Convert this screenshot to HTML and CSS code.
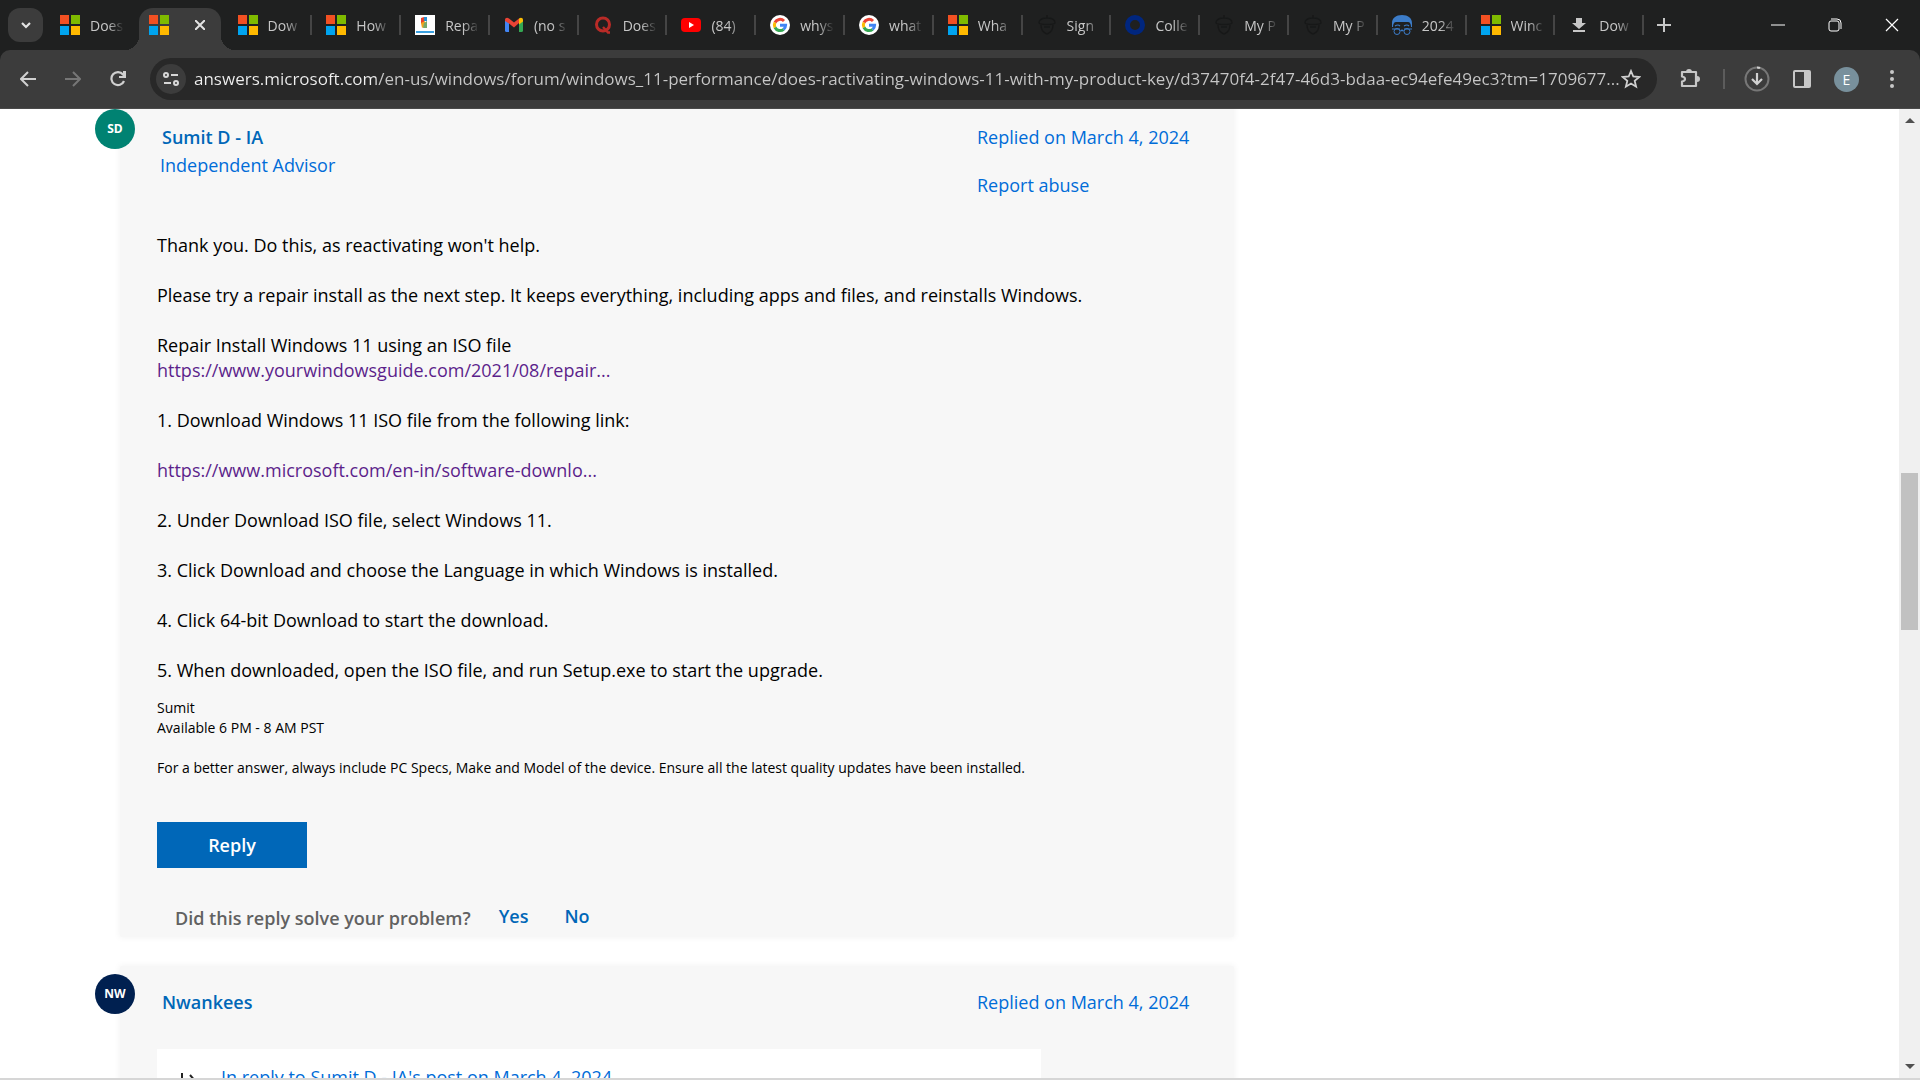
FILE: index.html
```html
<!DOCTYPE html>
<html lang="en">
  <head>
    <meta charset="UTF-8" />
    <meta name="viewport" content="width=device-width, initial-scale=1.0" />
    <title>Microsoft Community</title>
    <link rel="stylesheet" href="styles.css">
  </head>
  <body>
    <!-- shared icons -->
    <svg class="sprites" aria-hidden="true">
      <symbol id="ms" viewBox="0 0 20 20">
        <path fill="#f25022" d="M0 0h9v9H0z" />
        <path fill="#7fba00" d="M11 0h9v9h-9z" />
        <path fill="#00a4ef" d="M0 11h9v9H0z" />
        <path fill="#ffb900" d="M11 11h9v9h-9z" />
      </symbol>
      <symbol id="google" viewBox="0 0 20 20">
        <circle cx="10" cy="10" r="10" fill="#fff" />
        <path fill="none" stroke="#ea4335" stroke-width="3" d="M5 7.500a5.600 5.600 0 0 1 9-1.500" />
        <path fill="none" stroke="#fbbc05" stroke-width="3" d="M5 12.500a5.600 5.600 0 0 1 0-5" />
        <path fill="none" stroke="#34a853" stroke-width="3" d="M5 12.500a5.600 5.600 0 0 0 8.600 1.800" />
        <path fill="none" stroke="#4285f4" stroke-width="3" d="M10 10.200h5.600a5.600 5.600 0 0 1-2 4.100" />
      </symbol>
      <symbol id="acorn" viewBox="0 0 20 20">
        <path fill="none" stroke="#171818" stroke-width="1.400" d="M2 8c0-3 3-5 8-5s8 2 8 5c-1 2-15 2-16 0zM4 10c0 5 3 8 6 9 3-1 6-4 6-9M10 3V0M7 12h6" />
      </symbol>
    </svg>

    <header class="browser">
      <div class="tab-strip">
        <button class="tab-search" aria-label="Search tabs">
          <svg width="12" height="8" viewBox="0 0 12 8"><path d="M2 2l4 4 4-4" fill="none" stroke="#e3e3e3" stroke-width="2.200" /></svg>
        </button>
        <nav class="tabs">
          <button class="tab plain"><svg class="favicon"><use href="#ms" /></svg><span class="tab-title">Does</span></button>
          <button class="tab active" aria-label="Current tab">
            <svg class="favicon"><use href="#ms" /></svg>
            <svg class="tab-close" width="10" height="10" viewBox="0 0 10 10"><path d="M0 0l10 10M10 0L0 10" stroke="#e3e3e3" stroke-width="2" /></svg>
          </button>
          <button class="tab"><svg class="favicon"><use href="#ms" /></svg><span class="tab-title">Dow</span></button>
          <button class="tab"><svg class="favicon"><use href="#ms" /></svg><span class="tab-title">How</span></button>
          <button class="tab">
            <svg class="favicon" viewBox="0 0 20 20">
              <path fill="#fff" d="M0 0h20v20H0z" />
              <path fill="#e8432e" d="M6 3l3-1v5l-3 2z" />
              <path fill="#2a8fd0" d="M9 2h3v4H9z" />
              <path fill="#f3a21b" d="M6 8l4-2v5l-3 2z" />
              <path fill="#78a96a" d="M9 8l3-2v7H8z" />
              <path fill="#3aa0e0" d="M1 16h18v2H1z" />
            </svg>
            <span class="tab-title">Repa</span>
          </button>
          <button class="tab">
            <svg class="favicon" viewBox="0 0 20 20">
              <path fill="#4285f4" d="M1 5l4 3v9H2.500A1.500 1.500 0 0 1 1 15.500z" />
              <path fill="#34a853" d="M19 5l-4 3v9h2.500a1.500 1.500 0 0 0 1.500-1.500z" />
              <path fill="#ea4335" d="M1 5c0-2 2-3 4-1.500l5 4 5-4V8l-5 4.500L5 8.500 1 6z" />
              <path fill="#fbbc04" d="M15 3.500c2-1.500 4-.5 4 1.500v1.500l-4 3z" />
            </svg>
            <span class="tab-title">(no s</span>
          </button>
          <button class="tab">
            <svg class="favicon" viewBox="0 0 20 20"><ellipse cx="10" cy="9.500" rx="6.500" ry="6.500" fill="none" stroke="#b92b27" stroke-width="3" /><path d="M10 12l5 5.500h2" fill="none" stroke="#b92b27" stroke-width="2.400" /></svg>
            <span class="tab-title">Does</span>
          </button>
          <button class="tab">
            <svg class="favicon" viewBox="0 0 20 20"><rect y="3" width="20" height="14" rx="4" fill="#f00" /><path fill="#fff" d="M8 7l5 3-5 3z" /></svg>
            <span class="tab-title">(84)</span>
          </button>
          <button class="tab"><svg class="favicon"><use href="#google" /></svg><span class="tab-title">whys</span></button>
          <button class="tab"><svg class="favicon"><use href="#google" /></svg><span class="tab-title">what</span></button>
          <button class="tab"><svg class="favicon"><use href="#ms" /></svg><span class="tab-title">Wha</span></button>
          <button class="tab"><svg class="favicon"><use href="#acorn" /></svg><span class="tab-title">Sign</span></button>
          <button class="tab">
            <svg class="favicon" viewBox="0 0 20 20"><circle cx="10" cy="10" r="7.500" fill="none" stroke="#00267f" stroke-width="5" /></svg>
            <span class="tab-title">Colle</span>
          </button>
          <button class="tab"><svg class="favicon"><use href="#acorn" /></svg><span class="tab-title">My P</span></button>
          <button class="tab"><svg class="favicon"><use href="#acorn" /></svg><span class="tab-title">My P</span></button>
          <button class="tab">
            <svg class="favicon" viewBox="0 0 20 20">
              <path fill="#3c7cc8" d="M0 12V8c0-5 4-8 10-8s10 3 10 8v4h-1c0-3-1-5-3-5H4c-2 0-3 2-3 5z" />
              <path fill="none" stroke="#3c7cc8" stroke-width="1.200" d="M3 11q3-2 5 0M12 11q3-2 5 0M0 14h8M12 14h8M8.500 16q1.500-1.500 3 0" />
              <circle cx="5" cy="16.500" r="3" fill="none" stroke="#3c7cc8" />
              <circle cx="15" cy="16.500" r="3" fill="none" stroke="#3c7cc8" />
            </svg>
            <span class="tab-title">2024</span>
          </button>
          <button class="tab"><svg class="favicon"><use href="#ms" /></svg><span class="tab-title">Winc</span></button>
          <button class="tab">
            <svg class="favicon" viewBox="0 0 20 20"><path fill="#c7c7c7" d="M7 3h6v5h4l-7 6-7-6h4zM4 15h12v2H4z" /></svg>
            <span class="tab-title">Dow</span>
          </button>
        </nav>
        <button class="new-tab" aria-label="New tab">
          <svg width="14" height="14" viewBox="0 0 14 14"><path d="M7 0v14M0 7h14" stroke="#c7c7c7" stroke-width="2" /></svg>
        </button>
        <div class="window-buttons">
          <button aria-label="Minimize"><svg width="14" height="14" viewBox="0 0 14 14"><path d="M0 7h14" stroke="#fff" /></svg></button>
          <button aria-label="Restore"><svg width="14" height="14" viewBox="0 0 14 14"><path d="M3 1h6q4 0 4 4v6M3 3h6q2 0 2 2v6q0 2-2 2H3q-2 0-2-2V5q0-2 2-2z" fill="none" stroke="#fff" /></svg></button>
          <button aria-label="Close"><svg width="14" height="14" viewBox="0 0 14 14"><path d="M1 1l12 12M13 1L1 13" stroke="#fff" stroke-width="1.200" /></svg></button>
        </div>
      </div>

      <div class="toolbar">
        <div class="nav-buttons">
          <button aria-label="Back"><svg width="16" height="16" viewBox="0 0 16 16"><path d="M16 8H2M8 1L1 8l7 7" fill="none" stroke="#d0d0d0" stroke-width="2" /></svg></button>
          <button aria-label="Forward"><svg width="16" height="16" viewBox="0 0 16 16"><path d="M0 8h14M8 1l7 7-7 7" fill="none" stroke="#767676" stroke-width="2" /></svg></button>
          <button aria-label="Reload"><svg width="16" height="16" viewBox="0 0 16 16"><path d="M14 10a6.500 6.500 0 1 1-1-6.500l1.500 1.500" fill="none" stroke="#d0d0d0" stroke-width="2.200" /><path d="M16 0v7H9V5h4V0z" fill="#d0d0d0" /></svg></button>
        </div>
        <div class="address-bar">
          <button class="site-info" aria-label="Site information">
            <svg width="16" height="14" viewBox="0 0 16 14" fill="none" stroke="#d8d8d8" stroke-width="2"><circle cx="3" cy="3" r="2" /><path d="M8 3h7M1 11h7" /><circle cx="13" cy="11" r="2" /></svg>
          </button>
          <input class="url" type="text" aria-label="Address" value="answers.microsoft.com/en-us/windows/forum/windows_11-performance/does-ractivating-windows-11-with-my-product-key/d37470f4-2f47-46d3-bdaa-ec94efe49ec3?tm=1709677..." />
          <button class="bookmark" aria-label="Bookmark this page">
            <svg width="20" height="20" viewBox="0 0 20 20"><path d="M10 2l2.300 5.500 6 .500-4.600 3.900 1.400 5.800L10 14.600l-5.100 3.100 1.400-5.800L1.700 8l6-.5z" fill="none" stroke="#d0d0d0" stroke-width="1.800" /></svg>
          </button>
        </div>
        <div class="toolbar-actions">
          <button aria-label="Extensions"><svg width="22" height="22" viewBox="0 0 22 22"><path d="M3 4h14v14H3v-4.500q3-.5 3-2.500T3 8.500z" fill="none" stroke="#c7c7c7" stroke-width="2.200" stroke-linejoin="round" /><path d="M7 4a3 3 0 0 1 6 0zM18 8a3 3 0 0 1 0 6z" fill="#c7c7c7" /></svg></button>
          <span class="divider"></span>
          <button aria-label="Downloads"><svg width="26" height="26" viewBox="0 0 26 26" fill="none"><circle cx="13" cy="13" r="11.500" stroke="#777" stroke-width="2" /><path d="M13 1.500q2 0 3 .500M13 7v11M8 13l5 5 5-5" stroke="#d0d0d0" stroke-width="2.200" /></svg></button>
          <button aria-label="Side panel"><svg width="18" height="20" viewBox="0 0 18 20"><rect x="1" y="2" width="16" height="16" rx="1" fill="none" stroke="#c7c7c7" stroke-width="2" /><path d="M11 2h6v16h-6z" fill="#c7c7c7" /></svg></button>
          <button class="profile" aria-label="Profile">E</button>
          <button aria-label="Menu"><svg width="4" height="18" viewBox="0 0 4 18" fill="#c7c7c7"><circle cx="2" cy="2" r="2" /><circle cx="2" cy="9" r="2" /><circle cx="2" cy="16" r="2" /></svg></button>
        </div>
      </div>
    </header>

    <div class="viewport">
      <main class="page">
        <div class="thread">
          <article class="post">
            <span class="avatar">SD</span>
            <div class="post-header">
              <div class="author">
                <a class="author-name" href="#">Sumit D - IA</a>
                <a class="author-role" href="#">Independent Advisor</a>
              </div>
              <div class="post-meta">
                <a href="#">Replied on March 4, 2024</a>
                <a href="#">Report abuse</a>
              </div>
            </div>
            <div class="post-body">
              <p>Thank you. Do this, as reactivating won't help.</p>
              <p>Please try a repair install as the next step. It keeps everything, including apps and files, and reinstalls Windows.</p>
              <p>Repair Install Windows 11 using an ISO file<br /><a href="#">https://www.yourwindowsguide.com/2021/08/repair...</a></p>
              <p>1. Download Windows 11 ISO file from the following link:</p>
              <p><a href="#">https://www.microsoft.com/en-in/software-downlo...</a></p>
              <p>2. Under Download ISO file, select Windows 11.</p>
              <p>3. Click Download and choose the Language in which Windows is installed.</p>
              <p>4. Click 64-bit Download to start the download.</p>
              <p>5. When downloaded, open the ISO file, and run Setup.exe to start the upgrade.</p>
            </div>
            <div class="signature">
              <p>Sumit<br />Available 6 PM - 8 AM PST</p>
              <p>For a better answer, always include PC Specs, Make and Model of the device. Ensure all the latest quality updates have been installed.</p>
            </div>
            <button class="reply-button">Reply</button>
            <div class="feedback">
              <span class="question">Did this reply solve your problem?</span>
              <div class="answers">
                <button>Yes</button>
                <button>No</button>
              </div>
            </div>
          </article>

          <article class="post">
            <span class="avatar navy">NW</span>
            <div class="post-header">
              <div class="author">
                <a class="author-name" href="#">Nwankees</a>
              </div>
              <div class="post-meta">
                <a href="#">Replied on March 4, 2024</a>
              </div>
            </div>
            <div class="quote">
              <svg width="20" height="20" viewBox="0 0 20 20"><path d="M3 0v10h13M11 2l6 7-6 8" fill="none" stroke="#222" stroke-width="2" /></svg>
              <a href="#">In reply to Sumit D - IA's post on March 4, 2024</a>
            </div>
          </article>
        </div>
      </main>
      <!-- page scrollbar -->
      <div class="scrollbar">
        <span class="arrow up"></span>
        <div class="track"><div class="thumb"></div></div>
        <span class="arrow down"></span>
      </div>
    </div>
    <div class="taskbar-edge"></div>
  </body>
</html>
```
FILE: styles.css
```css
* {
  box-sizing: border-box;
}

body {
  margin: 0;
  height: 100vh;
  display: flex;
  flex-direction: column;
  overflow: hidden;
  background-color: #fff;
  color: #000;
  font-family: "Open Sans", "Noto Sans", sans-serif;
  font-size: 18px;
}

button {
  border: none;
  padding: 0;
  background: none;
  color: inherit;
  font-family: inherit;
  cursor: pointer;
}

a {
  color: #006cd8;
  text-decoration: none;
}

p {
  margin: 0;
}

svg {
  display: block;
  flex: none;
}

.sprites {
  display: none;
}

/* Browser tabs */
.browser {
  flex: none;
  background-color: #1f2020;
}

.tab-strip {
  display: flex;
  align-items: center;
  height: 50px;
  padding-left: 8px;
}

.tab-search {
  display: flex;
  align-items: center;
  justify-content: center;
  width: 35px;
  height: 34px;
  margin-right: 5px;
  border-radius: 12px;
  background-color: #3c3c3c;
}

.tabs {
  flex: 1;
  display: flex;
  align-self: stretch;
}

.tab {
  position: relative;
  flex: 1 1 0;
  min-width: 0;
  display: flex;
  align-items: center;
  gap: 10px;
  padding-left: 12px;
  color: #c7c7c7;
  font-size: 14px;
}

.tab::after {
  content: "";
  position: absolute;
  right: 2px;
  width: 2px;
  height: 20px;
  background-color: #454545;
}

.tab.plain::after {
  display: none;
}

.favicon {
  width: 20px;
  height: 20px;
}

/* long titles fade out at the end */
.tab-title {
  width: 36px;
  overflow: hidden;
  white-space: nowrap;
  text-align: left;
  mask-image: linear-gradient(to right, #000 50%, transparent 95%);
}

.tab.active {
  z-index: 1;
  gap: 26px;
}

.tab.active::before {
  content: "";
  position: absolute;
  z-index: -1;
  top: 8px;
  bottom: 0;
  left: 2px;
  right: 5px;
  border-radius: 14px 14px 0 0;
  background-color: #3c3c3c;
}

/* curved feet of the active tab */
.tab.active::after {
  z-index: -2;
  left: -12px;
  right: -9px;
  bottom: 0;
  width: auto;
  height: 14px;
  background:
    radial-gradient(circle at 0 0, transparent 14px, #3c3c3c 14px) left / 14px 14px no-repeat,
    radial-gradient(circle at 100% 0, transparent 14px, #3c3c3c 14px) right / 14px 14px no-repeat;
}

.new-tab {
  display: flex;
  justify-content: center;
  width: 36px;
}

.window-buttons {
  display: flex;
  align-self: stretch;
  margin-left: 67px;
}

.window-buttons button {
  display: flex;
  align-items: center;
  justify-content: center;
  width: 57px;
}

/* Toolbar */
.toolbar {
  display: flex;
  align-items: center;
  height: 59px;
  padding: 0 6px 0 5px;
  border-bottom: 1px solid #4a4a4a;
  border-radius: 10px 10px 0 0;
  background-color: #3c3c3c;
}

.nav-buttons {
  display: flex;
}

.nav-buttons button {
  display: flex;
  align-items: center;
  justify-content: center;
  width: 45px;
  height: 42px;
}

.address-bar {
  flex: 1;
  min-width: 0;
  display: flex;
  align-items: center;
  height: 42px;
  margin-left: 10px;
  padding: 0 16px 0 6px;
  border-radius: 21px;
  background-color: #282828;
}

.site-info {
  display: flex;
  align-items: center;
  justify-content: center;
  width: 30px;
  height: 30px;
  border-radius: 50%;
  background-color: #3c3c3c;
}

.url {
  flex: 1;
  min-width: 0;
  margin-left: 8px;
  padding: 0;
  border: none;
  outline: none;
  color: transparent;
  /* host name is brighter than the path */
  background: linear-gradient(to right, #f0f0f0 182px, #c7c7c7 182px);
  background-clip: text;
  font-family: inherit;
  font-size: 17px;
  line-height: 28px;
}

.toolbar-actions {
  display: flex;
  align-items: center;
}

.toolbar-actions button {
  display: flex;
  align-items: center;
  justify-content: center;
  width: 45px;
  height: 42px;
}

.toolbar-actions button:first-child {
  width: 66px;
}

.divider {
  width: 2px;
  height: 20px;
  margin-right: 9px;
  background-color: #5c5c5c;
}

.toolbar-actions .profile {
  width: 25px;
  height: 25px;
  margin: 0 10px;
  border-radius: 50%;
  background-color: #78909c;
  color: #fff;
  font-size: 14px;
}

/* Page */
.viewport {
  flex: 1;
  min-height: 0;
  display: flex;
}

.page {
  flex: 1;
  display: grid;
  grid-template-columns: 1114fr 665fr;
  padding-left: 120px;
  overflow: hidden;
}

.thread {
  margin-top: -8px;
}

.post {
  position: relative;
  margin-bottom: 29px;
  padding: 22px 0 5px 37px;
  border-radius: 2px;
  background-color: #f7f7f7;
  box-shadow: 0 0 6px 1px #f4f4f4;
}

.avatar {
  position: absolute;
  top: 8px;
  left: -25px;
  width: 40px;
  height: 40px;
  border-radius: 50%;
  background-color: #008272;
  color: #fff;
  font-size: 12px;
  font-weight: 700;
  line-height: 40px;
  text-align: center;
}

.avatar.navy {
  background-color: #002050;
}

.post-header {
  display: flex;
  margin-bottom: 33px;
  line-height: 28px;
}

.author {
  flex: 1;
  display: flex;
  flex-direction: column;
  align-items: flex-start;
  padding-left: 3px;
}

.author-name {
  padding-left: 2px;
  color: #0067b8;
  font-weight: 600;
}

.post-meta {
  display: flex;
  flex-direction: column;
  align-items: flex-start;
  gap: 20px;
  width: 257px;
}

.post-body {
  display: flex;
  flex-direction: column;
  gap: 25px;
  padding-top: 1px;
  line-height: 25px;
}

.post-body a {
  color: #5c1f8b;
}

.signature {
  display: flex;
  flex-direction: column;
  gap: 20px;
  margin-top: 15px;
  font-size: 14px;
  line-height: 20px;
}

.reply-button {
  width: 150px;
  height: 46px;
  margin-top: 44px;
  background-color: #0067b8;
  color: #fff;
  font-size: 18px;
  font-weight: 600;
}

.feedback {
  display: flex;
  align-items: flex-start;
  gap: 28px;
  margin-top: 36px;
  padding-left: 18px;
  line-height: 28px;
}

.answers {
  display: flex;
  gap: 36px;
}

.answers button {
  color: #0067b8;
  font-size: 18px;
  font-weight: 600;
  line-height: 24px;
}

.question {
  color: #616161;
  font-weight: 600;
}

.quote {
  display: flex;
  gap: 22px;
  margin-right: 193px;
  padding: 14px 22px 30px;
  background-color: #fff;
  line-height: 28px;
}

.quote svg {
  margin-top: 10px;
}

/* Scrollbar */
.scrollbar {
  display: flex;
  flex-direction: column;
  align-items: center;
  width: 21px;
  padding: 9px 0;
  background-color: #f0f0f0;
}

.track {
  flex: 1;
  display: flex;
  flex-direction: column;
  width: 17px;
}

/* space above and below the thumb */
.track::before {
  content: "";
  flex: 350;
}

.track::after {
  content: "";
  flex: 434;
}

.thumb {
  flex: 157;
  background-color: #c1c1c1;
}

.arrow {
  border: 5px solid transparent;
}

.arrow.up {
  border-top-width: 0;
  border-bottom-color: #505050;
}

.arrow.down {
  border-bottom-width: 0;
  border-top-color: #505050;
}

.taskbar-edge {
  flex: none;
  height: 2px;
  background-color: #d6d6d6;
}
```
